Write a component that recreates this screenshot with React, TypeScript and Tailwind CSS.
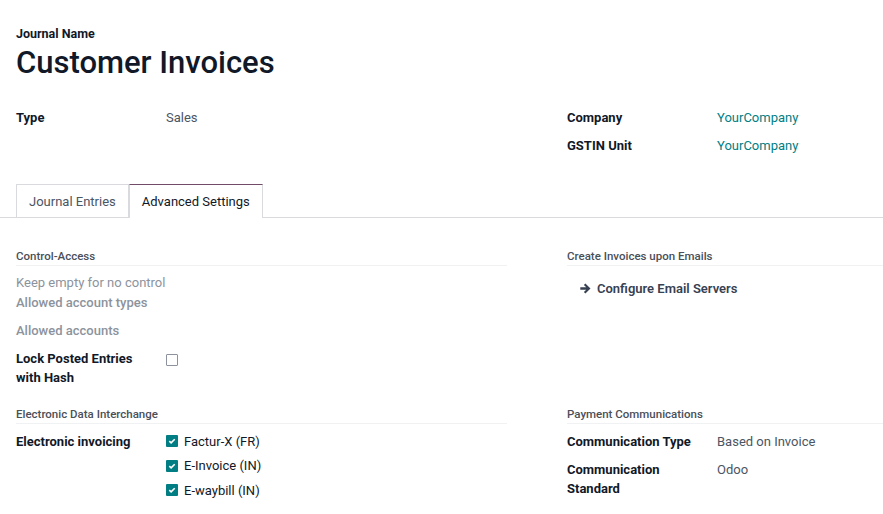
import React from "react";

function Check({ checked }: { checked?: boolean }) {
  if (!checked) {
    return <span className="inline-block w-[12px] h-[12px] border border-[#8c939d] rounded-[1px] bg-white" />;
  }
  return (
    <span className="inline-flex items-center justify-center w-[12px] h-[12px] rounded-[1px] bg-[#017e84]">
      <svg width="8" height="8" viewBox="0 0 8 8">
        <path d="M1.3 4.2 3.1 5.9 6.7 2.2" fill="none" stroke="white" strokeWidth="1.6" />
      </svg>
    </span>
  );
}

function SectionHead({ title }: { title: string }) {
  return (
    <div className="text-[11.5px] leading-[16px] font-medium text-[#4a4f59] pb-[1px] border-b border-[#f0f1f2]">
      {title}
    </div>
  );
}

function Field({ label, children }: { label: React.ReactNode; children?: React.ReactNode }) {
  return (
    <div className="flex py-[4px]">
      <div className="w-[150px] shrink-0 font-bold text-[#111827]">{label}</div>
      <div className="flex-1">{children}</div>
    </div>
  );
}

export default function App() {
  return (
    <div
      className="w-[883px] h-[514px] overflow-hidden bg-white text-[13px] leading-[19.5px] text-[#374151]"
      style={{ fontFamily: "Roboto, 'Liberation Sans', sans-serif" }}
    >
      {/* Title */}
      <div className="pl-4 pt-[24px]">
        <div className="font-bold text-[#111827] text-[12.5px] leading-[19px]">Journal Name</div>
        <h1 className="mt-[2px] text-[31px] leading-[36px] font-medium text-[#111827]">Customer Invoices</h1>
      </div>

      {/* Top groups */}
      <div className="flex pl-4 mt-[23px]">
        <div className="w-[491px] mr-[60px]">
          <Field label="Type">
            <span className="text-[#4b5563]">Sales</span>
          </Field>
        </div>
        <div className="flex-1">
          <Field label="Company">
            <span className="text-[#017e84]">YourCompany</span>
          </Field>
          <Field label="GSTIN Unit">
            <span className="text-[#017e84]">YourCompany</span>
          </Field>
        </div>
      </div>

      {/* Tabs */}
      <div className="mt-[25px] pl-4 flex border-b border-[#d8dadd] h-[34px]">
        <div className="h-[34px] px-[12px] flex items-center border border-b-0 border-[#d8dadd] text-[#4b5563]">
          Journal Entries
        </div>
        <div className="h-[34px] px-[12px] flex items-center border-x border-[#d8dadd] border-t border-t-[#714b67] bg-white -mb-px text-[#111827]">
          Advanced Settings
        </div>
      </div>

      {/* Row 1 */}
      <div className="flex pl-4 pt-[30px]">
        <div className="w-[491px] mr-[60px]">
          <SectionHead title="Control-Access" />
          <div className="mt-[7px] text-[#8c939d]">Keep empty for no control</div>
          <div className="pb-[5px] text-[#8c939d] font-medium">Allowed account types</div>
          <div className="py-[4px] text-[#8c939d] font-medium">Allowed accounts</div>
          <div className="flex py-[4px]">
            <div className="w-[150px] font-bold text-[#111827]">
              Lock Posted Entries
              <br />
              with Hash
            </div>
            <div className="pt-[3px]">
              <Check />
            </div>
          </div>
        </div>
        <div className="flex-1">
          <SectionHead title="Create Invoices upon Emails" />
          <div className="mt-[13px] pl-[13px] flex items-center gap-[6px] font-semibold text-[#374151]">
            <svg width="11" height="11" viewBox="0 0 11 11">
              <path d="M0.3 4.3h5.9L3.9 2 5.4 0.5 10.5 5.5 5.4 10.5 3.9 9 6.2 6.7H0.3z" fill="#374151" />
            </svg>
            Configure Email Servers
          </div>
        </div>
      </div>

      {/* Row 2 */}
      <div className="flex pl-4 pt-[14px]">
        <div className="w-[491px] mr-[60px]">
          <SectionHead title="Electronic Data Interchange" />
          <div className="flex pt-[4px] mt-[4px]">
            <div className="w-[150px] font-bold text-[#111827]">Electronic invoicing</div>
            <div className="flex flex-col gap-[5px] text-[#111827]">
              {["Factur-X (FR)", "E-Invoice (IN)", "E-waybill (IN)"].map((t) => (
                <label key={t} className="flex items-center gap-[6px]">
                  <Check checked />
                  <span>{t}</span>
                </label>
              ))}
            </div>
          </div>
        </div>
        <div className="flex-1">
          <SectionHead title="Payment Communications" />
          <div className="mt-[4px] flex flex-col gap-[0.5px]">
            <Field label="Communication Type">
              <span className="text-[#4b5563]">Based on Invoice</span>
            </Field>
            <Field
              label={
                <>
                  Communication
                  <br />
                  Standard
                </>
              }
            >
              <span className="text-[#4b5563]">Odoo</span>
            </Field>
          </div>
        </div>
      </div>
    </div>
  );
}
